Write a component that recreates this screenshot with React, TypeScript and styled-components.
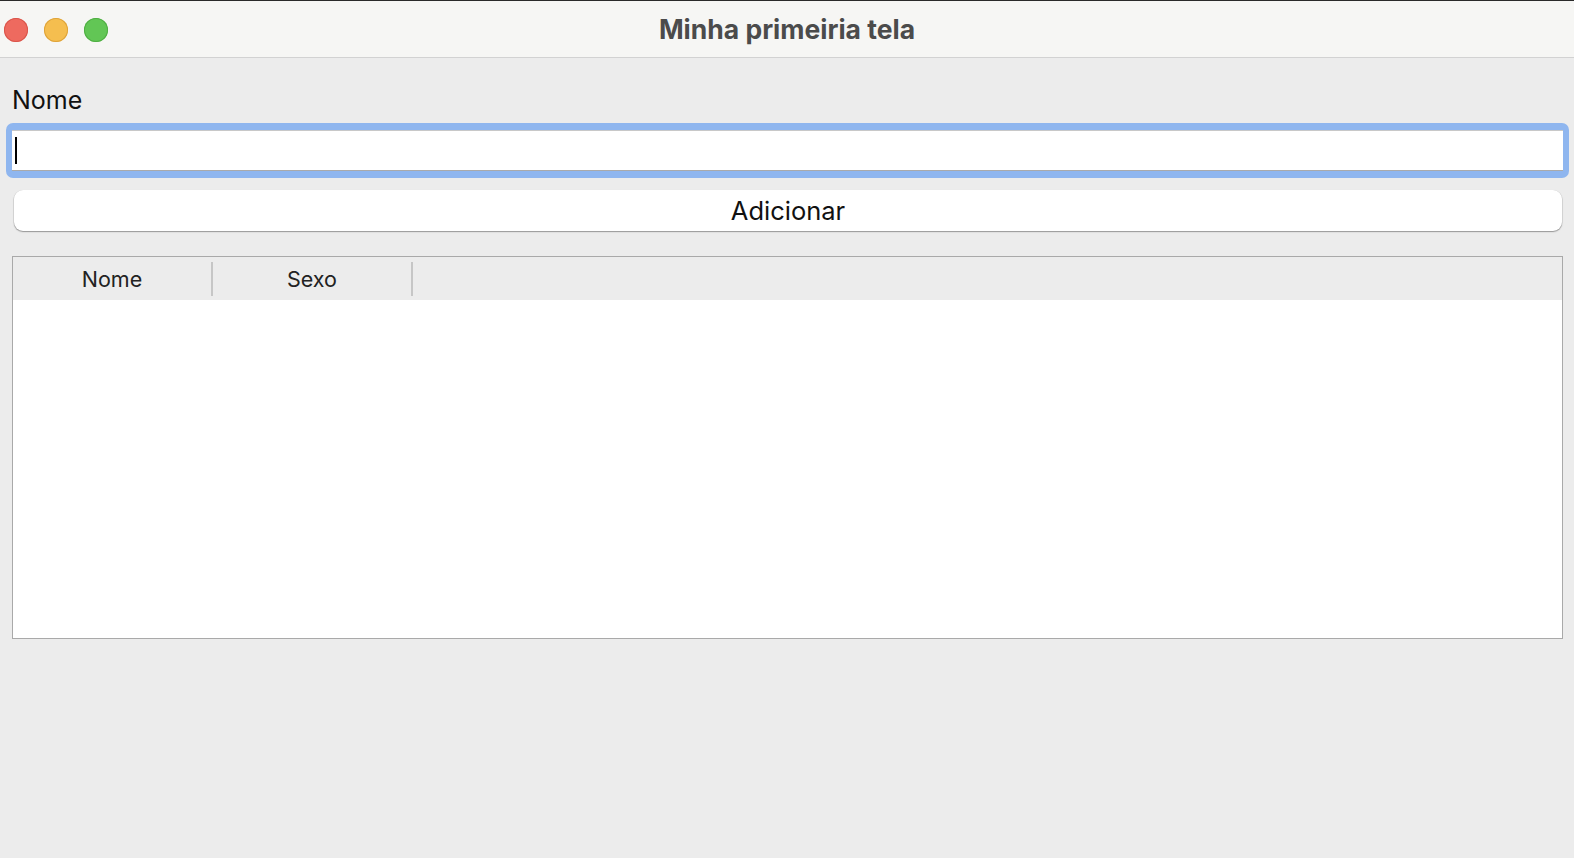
import { createGlobalStyle } from "styled-components";
import styled from "styled-components";

const GlobalStyle = createGlobalStyle`
  html, body {
    margin: 0;
    padding: 0;
    background: #ececec;
  }
  #root {
    height: 858px;
  }
`;

const Window = styled.div`
  height: 858px;
  display: flex;
  flex-direction: column;
  background: #ececec;
  border-top: 1px solid #2a2a2a;
  box-sizing: border-box;
  font-family: Inter, "Liberation Sans", sans-serif;
  overflow: hidden;
`;

const TitleBar = styled.div`
  height: 57px;
  flex: none;
  display: flex;
  align-items: center;
  position: relative;
  background: #f6f6f4;
  border-bottom: 1px solid #d2d2d2;
  box-sizing: border-box;
`;

const Lights = styled.div`
  display: flex;
  gap: 16px;
  padding-left: 4px;
  margin-top: 1px;
`;

const Light = styled.span<{ $fill: string; $edge: string }>`
  width: 24px;
  height: 24px;
  border-radius: 50%;
  background: ${(p) => p.$fill};
  box-shadow: inset 0 0 0 1px ${(p) => p.$edge};
`;

const Title = styled.div`
  position: absolute;
  left: 0;
  right: 0;
  text-align: center;
  font-size: 26.5px;
  font-weight: 700;
  color: #4b4b4b;
  padding-left: 0;
  pointer-events: none;
`;

const Content = styled.div`
  display: flex;
  flex-direction: column;
  padding: 27px 11px 0 12px;
`;

const Label = styled.div`
  font-size: 25px;
  line-height: 30px;
  color: #111;
  margin-bottom: 8px;
`;

const FocusRing = styled.div`
  margin-left: -6px;
  margin-right: -6px;
  padding: 7px 6px;
  border-radius: 7px;
  background: #8fb6ef;
`;

const Entry = styled.div`
  height: 41px;
  background: #fff;
  border-top: 1px solid #c8c8c8;
  border-bottom: 1px solid #aaa;
  box-sizing: border-box;
  display: flex;
  align-items: center;
  padding-left: 3px;
`;

const Caret = styled.span`
  width: 2px;
  height: 27px;
  background: #000;
`;

const Button = styled.div`
  margin-top: 12px;
  margin-left: 2px;
  margin-right: 1px;
  height: 41px;
  border-radius: 9px;
  background: #fff;
  box-shadow: 0 0.5px 0 0.5px rgba(0, 0, 0, 0.12), 0 1px 1.5px rgba(0, 0, 0, 0.28);
  display: flex;
  align-items: center;
  justify-content: center;
  font-size: 25.5px;
  color: #111;
`;

const Table = styled.div`
  margin-top: 25px;
  height: 383px;
  border: 1px solid #a9a9a9;
  background: #fff;
  display: flex;
  flex-direction: column;
  box-sizing: border-box;
`;

const Header = styled.div`
  height: 43px;
  flex: none;
  background: #ececec;
  display: flex;
  align-items: center;
`;

const HeadCell = styled.div`
  width: 198px;
  height: 34px;
  border-right: 2px solid #c6c6c6;
  display: flex;
  align-items: center;
  justify-content: center;
  font-size: 21.5px;
  color: #222;
`;

const columns = ["Nome", "Sexo"];

export default function App() {
  return (
    <>
      <GlobalStyle />
      <Window>
        <TitleBar>
          <Lights>
            <Light $fill="#ee6a5f" $edge="#d9554b" />
            <Light $fill="#f5be4f" $edge="#dea33a" />
            <Light $fill="#62c655" $edge="#4fae43" />
          </Lights>
          <Title>Minha primeiria tela</Title>
        </TitleBar>
        <Content>
          <Label>Nome</Label>
          <FocusRing>
            <Entry>
              <Caret />
            </Entry>
          </FocusRing>
          <Button>Adicionar</Button>
          <Table>
            <Header>
              {columns.map((c) => (
                <HeadCell key={c}>{c}</HeadCell>
              ))}
            </Header>
          </Table>
        </Content>
      </Window>
    </>
  );
}
